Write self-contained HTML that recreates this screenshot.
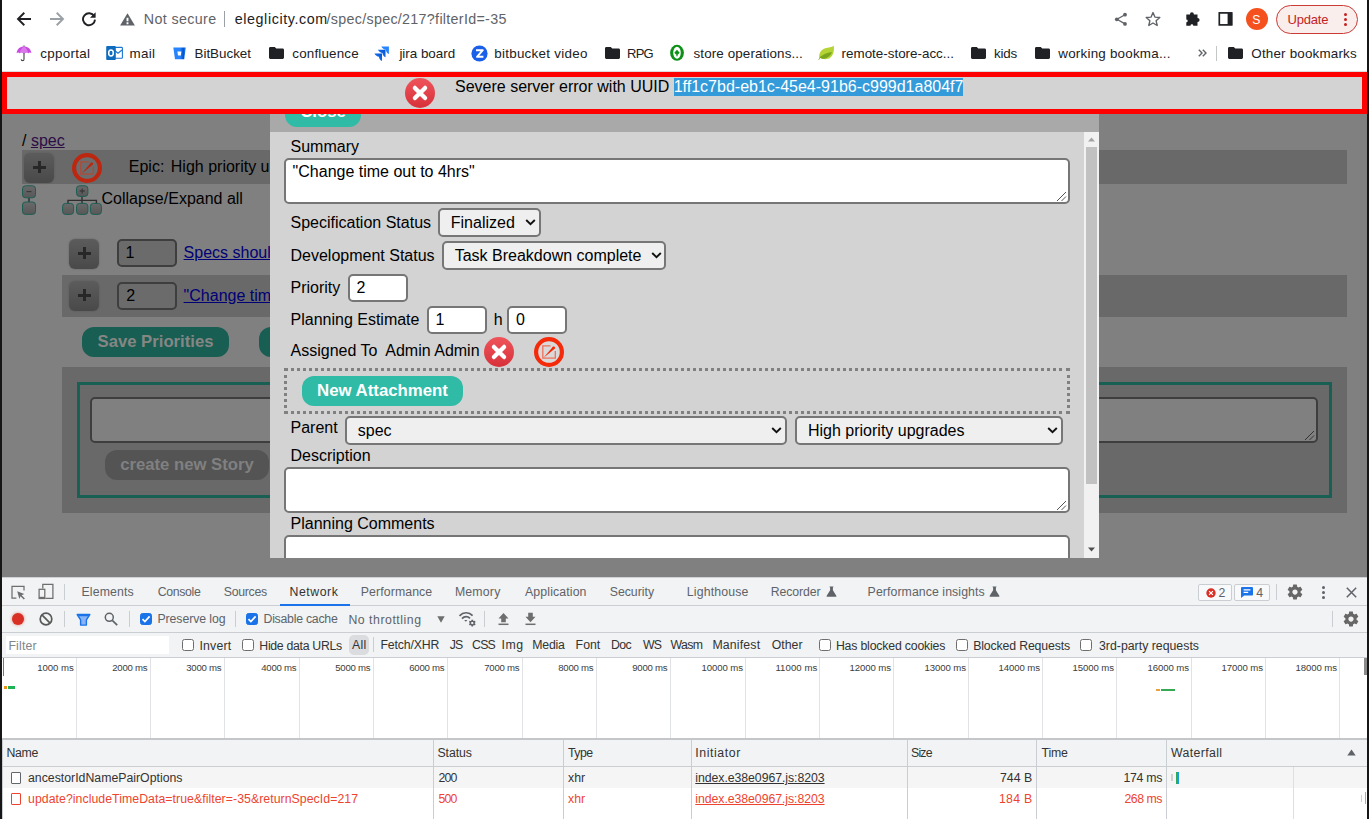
<!DOCTYPE html>
<html>
<head>
<meta charset="utf-8">
<title>spec</title>
<style>
*{box-sizing:border-box;margin:0;padding:0}
html,body{width:1369px;height:819px;overflow:hidden;background:#fff;font-family:"Liberation Sans",sans-serif;}
.abs,.abs div,.abs svg,.abs i,.abs b{position:absolute}
#root{position:absolute;left:0;top:0;width:1369px;height:819px;overflow:hidden}
.t{white-space:pre}
.pt{font-size:16px;white-space:pre;line-height:19px;color:#000}
.lnk{color:#000077;text-decoration:underline}
.plus{width:30px;height:30px;border-radius:6px;background:linear-gradient(#5c5c5c,#494949);box-shadow:0 0 1.5px rgba(60,60,60,.6)}
.plus i{left:8.9px;top:12.6px;width:13.2px;height:3px;background:#272727}
.plus b{left:14px;top:7.6px;width:3.2px;height:12.8px;background:#272727}
.pin{width:60px;height:28px;border:2px solid #3e3e3e;border-radius:5px;background:#6b6b6b}
.pbtn{height:30px;border-radius:12px;background:#185e53;color:#868684;font-weight:bold;font-size:16.7px;line-height:30px;text-align:center;white-space:pre}
.mbtn{height:30px;border-radius:12px;background:#2fbba6;color:#fff;font-weight:bold;font-size:16.8px;line-height:30px;text-align:center;white-space:pre}
.mta{border:2px solid #767676;border-radius:5px;background:#fff}
.min{width:60px;height:28px;border:2px solid #767676;border-radius:5px;background:#fff}
.msel{height:28.5px;border:2px solid #767676;border-radius:5px;background:#efefef}
.msel span{position:absolute;left:10.6px;top:2.8px}
.msel svg{right:2.8px;top:8.8px}
.cbx{width:12px;height:12px;border:1.3px solid #6e6e6e;border-radius:2.5px;background:#fff}
.cbx.on{background:#1a73e8;border-color:#1a73e8}
.vl{top:740px;width:1px;height:79px;background:#cacdd1}
</style>
</head>
<body>
<div id="root" class="abs">
<div style="left:0;top:0;width:2px;height:819px;background:#161616"></div>
<div style="left:1367px;top:0;width:2px;height:819px;background:#161616"></div>
<div id="chrome" class="abs">
<div style="left:2px;top:71px;width:1365px;height:1px;background:#dadce0"></div>
<!-- nav icons -->
<svg style="left:16px;top:11px" width="16" height="16" viewBox="0 0 16 16"><path d="M15 8H2.5M8.3 1.8L2 8l6.3 6.2" fill="none" stroke="#202124" stroke-width="1.9"/></svg>
<svg style="left:48.5px;top:11px" width="16" height="16" viewBox="0 0 16 16"><path d="M1 8h12.5M7.7 1.8L14 8l-6.3 6.2" fill="none" stroke="#9aa0a6" stroke-width="1.9"/></svg>
<svg style="left:80.5px;top:10.5px" width="16" height="16" viewBox="0 0 16 16"><path d="M13.2 5.2A6 6 0 1 0 14 8.6" fill="none" stroke="#202124" stroke-width="1.9"/><path d="M14.6 1.2v5.6H9z" fill="#202124"/></svg>
<svg style="left:120.400px;top:12.500px" width="15" height="13" viewBox="0 0 15 13"><path d="M7.500 .200L14.900 12.600H.100Z" fill="#5f6368"/><path d="M7.500 4.800v3.400M7.500 9.300v1.900" stroke="#fff" stroke-width="1.900"/></svg>
<div style="left:224px;top:11px;width:1px;height:15.5px;background:#9aa0a6"></div>
<!-- right icons -->
<svg style="left:1114px;top:11.500px" width="14" height="15" viewBox="0 0 14 15"><path d="M11 2.700L3 7.300l8 4.600" fill="none" stroke="#5f6368" stroke-width="1.300"/><circle cx="11" cy="2.700" r="1.900" fill="#5f6368"/><circle cx="2.800" cy="7.300" r="1.900" fill="#5f6368"/><circle cx="11" cy="11.900" r="1.900" fill="#5f6368"/></svg>
<svg style="left:1145px;top:11px" width="16" height="16" viewBox="0 0 16 16"><path d="M8 1.6l1.9 4.5 4.9.4-3.7 3.2 1.1 4.8L8 12l-4.2 2.5 1.1-4.8L1.2 6.5l4.9-.4z" fill="none" stroke="#5f6368" stroke-width="1.4" stroke-linejoin="round"/></svg>
<svg style="left:1185px;top:11px" width="17" height="16" viewBox="0 0 17 16"><path d="M1.300 3.400H4.900a2 2.100 0 1 1 4 0H12.500V6.900a2.100 2 0 1 1 0 4V14.700H8.300a1.400 1.400 0 1 0-2.800 0H1.300V11.300a1.400 1.400 0 1 0 0-2.800z" fill="#202124"/></svg>
<svg style="left:1217.500px;top:12px" width="15" height="14" viewBox="0 0 15 14"><rect x="1.300" y=".9" width="12.400" height="12" fill="none" stroke="#202124" stroke-width="1.700"/><rect x="9.600" y="1" width="4.600" height="12" fill="#202124"/></svg>
<div style="left:1246px;top:8.4px;width:22px;height:22px;border-radius:11px;background:#f4511e"></div>
<div style="left:1275.5px;top:5px;width:82.5px;height:28.5px;border-radius:15px;background:#faeeec;border:1px solid #cb3a35"></div>
<div style="left:1343.9px;top:13.1px;width:2.8px;height:2.8px;border-radius:2px;background:#c5221f"></div>
<div style="left:1343.9px;top:18px;width:2.8px;height:2.8px;border-radius:2px;background:#c5221f"></div>
<div style="left:1343.9px;top:23.3px;width:2.8px;height:2.8px;border-radius:2px;background:#c5221f"></div>
<!-- bookmark icons -->
<svg style="left:16px;top:45px" width="16" height="17" viewBox="0 0 16 17"><path d="M.6 8.2C1 3.8 4 1.4 8 1.4s7 2.4 7.4 6.8c-.9-.9-2.2-.9-3.1 0-.9-.9-2.5-.9-3.4 0H7.100c-.9-.9-2.500-.9-3.400 0-.9-.9-2.200-.9-3.100 0z" fill="#c84ae0"/><path d="M8 1.400C5.500 3 4.200 5.400 3.700 8.200 4.600 7.300 6.200 7.300 7.100 8.200h1.800c.9-.9 2.500-.9 3.400 0C11.800 5.400 10.500 3 8 1.400z" fill="#e08af0" opacity=".7"/><path d="M8 .6v1M8 8v6.200a1.400 1.400 0 0 1-2.800 0" fill="none" stroke="#444" stroke-width="1.1"/></svg>
<svg style="left:106px;top:45px" width="17" height="16" viewBox="0 0 17 16"><rect x="7" y="2.400" width="9.400" height="10.800" rx=".8" fill="#fff" stroke="#1976d2" stroke-width="1.1"/><path d="M8 5l4 3.200L16 5" fill="none" stroke="#1976d2" stroke-width="1.100"/><rect x=".2" y="1" width="9.600" height="14" rx=".9" fill="#0f6cbd"/><ellipse cx="5" cy="8" rx="2.300" ry="3" fill="none" stroke="#fff" stroke-width="1.500"/></svg>
<svg style="left:172.500px;top:46.500px" width="14" height="13" viewBox="0 0 14 13"><defs><linearGradient id="bg" x1="0" y1="0" x2="1" y2="0"><stop offset=".55" stop-color="#2684ff"/><stop offset=".8" stop-color="#0052cc"/><stop offset="1" stop-color="#2684ff"/></linearGradient></defs><path d="M.300.600h12.500l-1.600 11.600H2z" fill="url(#bg)"/><path d="M4.400 4.500h4l-.6 3.900H5z" fill="#fff"/></svg>
<svg class="fold" style="left:269px;top:46.500px" width="15" height="12" viewBox="0 0 15 12"><path d="M1.400 0h4.400l1.500 1.500h6.300c.8 0 1.400.6 1.400 1.400v7.700c0 .8-.6 1.400-1.400 1.400H1.400C.6 12 0 11.400 0 10.600V1.400C0 .6.600 0 1.400 0z" fill="#202124"/></svg>
<svg style="left:374px;top:45.500px" width="16" height="16" viewBox="0 0 16 16"><defs><linearGradient id="jg" x1="1" y1="0" x2="0" y2="1"><stop offset="0" stop-color="#0052cc"/><stop offset="1" stop-color="#2684ff"/></linearGradient></defs><path id="jc" d="M0 0H7.600V7.600C6.200 7.100 4.700 5.400 4.500 3.300C3 3.100.8 2 0 0Z" transform="translate(7.300 .4)" fill="#2684ff"/><path d="M0 0H7.600V7.600C6.200 7.100 4.700 5.400 4.500 3.300C3 3.100.8 2 0 0Z" transform="translate(3.900 3.700)" fill="url(#jg)"/><path d="M0 0H7.600V7.600C6.200 7.100 4.700 5.400 4.500 3.300C3 3.100.8 2 0 0Z" transform="translate(.4 7.400)" fill="url(#jg)"/></svg>
<svg style="left:470.500px;top:45px" width="17" height="17" viewBox="0 0 17 17"><circle cx="8.500" cy="8.500" r="8.100" fill="#1a5fe8"/><path d="M5 5.200h6.800L6 11.800h6.400" fill="none" stroke="#fff" stroke-width="1.900" stroke-linejoin="round"/></svg>
<svg class="fold" style="left:605px;top:46.500px" width="15" height="12" viewBox="0 0 15 12"><path d="M1.400 0h4.400l1.500 1.500h6.300c.8 0 1.400.6 1.400 1.400v7.700c0 .8-.6 1.400-1.400 1.400H1.400C.6 12 0 11.400 0 10.600V1.400C0 .6.600 0 1.400 0z" fill="#202124"/></svg>
<svg style="left:669px;top:44px" width="16" height="18" viewBox="0 0 16 18"><ellipse cx="8" cy="8.800" rx="6.900" ry="8" fill="#0d9018"/><ellipse cx="8" cy="8.800" rx="3.800" ry="6" fill="#fff"/><path d="M8 5.800L10.700 8.700L9 10.400H8.600V12.200H7.400V10.400H7L5.300 8.700Z" fill="#0d9018"/></svg>
<svg style="left:818px;top:45px" width="17" height="16" viewBox="0 0 17 16"><path d="M15.800.800c.6 5.400-.5 9.700-3.700 12-3 2.100-7.300 1.800-10.900-.3C1 7.600 3.400 4.500 7.300 3.300 10.500 2.400 13.700 2.600 15.800.800z" fill="#b5d334"/><path d="M1.200 12.500c3-2.800 7.500-4.900 12.800-5.600-1.300 3.800-4.800 6.700-9.600 6.800z" fill="#7aa51e"/><path d="M.8 14.600c.5-.9 1-1.500 1.700-2.100" stroke="#7aa51e" stroke-width="1"/></svg>
<svg class="fold" style="left:971px;top:46.500px" width="15" height="12" viewBox="0 0 15 12"><path d="M1.400 0h4.400l1.500 1.500h6.300c.8 0 1.400.6 1.400 1.400v7.700c0 .8-.6 1.400-1.400 1.400H1.400C.6 12 0 11.400 0 10.600V1.400C0 .6.600 0 1.400 0z" fill="#202124"/></svg>
<svg class="fold" style="left:1035px;top:46.500px" width="15" height="12" viewBox="0 0 15 12"><path d="M1.400 0h4.400l1.500 1.500h6.300c.8 0 1.400.6 1.400 1.400v7.700c0 .8-.6 1.400-1.400 1.400H1.400C.6 12 0 11.400 0 10.600V1.400C0 .6.600 0 1.400 0z" fill="#202124"/></svg>
<svg style="left:1197.500px;top:49px" width="9" height="8" viewBox="0 0 9 8"><path d="M.8.800L4 4 .8 7.200M4.800.800L8 4 4.800 7.200" fill="none" stroke="#5f6368" stroke-width="1.400"/></svg>
<div style="left:1216px;top:45.500px;width:1px;height:15px;background:#c4c7c5"></div>
<svg class="fold" style="left:1228px;top:46.500px" width="15" height="12" viewBox="0 0 15 12"><path d="M1.400 0h4.400l1.500 1.500h6.300c.8 0 1.400.6 1.400 1.400v7.700c0 .8-.6 1.400-1.400 1.400H1.400C.6 12 0 11.400 0 10.600V1.400C0 .6.600 0 1.400 0z" fill="#202124"/></svg>
<div class="t" style="left:143.8px;top:10px;font-size:14.3px;line-height:18px;color:#5f6368;letter-spacing:0.36px;">Not secure</div>
<div class="t" style="left:234.7px;top:10px;font-size:14.3px;line-height:18px;color:#202124;letter-spacing:0.60px;">eleglicity.com</div>
<div class="t" style="left:326.5px;top:10px;font-size:14.3px;line-height:18px;color:#5f6368;letter-spacing:0.30px;">/spec/spec/217?filterId=-35</div>
<div class="t" style="left:1252.3px;top:12px;font-size:12.2px;line-height:16px;color:#fff;">S</div>
<div class="t" style="left:1287.6px;top:11px;font-size:13px;line-height:17px;color:#c5221f;letter-spacing:-0.20px;">Update</div>
<div class="t" style="left:40.2px;top:45px;font-size:13.4px;line-height:17px;color:#202124;letter-spacing:0.31px;">cpportal</div>
<div class="t" style="left:129.4px;top:45px;font-size:13.4px;line-height:17px;color:#202124;letter-spacing:0.37px;">mail</div>
<div class="t" style="left:194.5px;top:45px;font-size:13.4px;line-height:17px;color:#202124;letter-spacing:-0.01px;">BitBucket</div>
<div class="t" style="left:292.3px;top:45px;font-size:13.4px;line-height:17px;color:#202124;letter-spacing:0.18px;">confluence</div>
<div class="t" style="left:399.4px;top:45px;font-size:13.4px;line-height:17px;color:#202124;letter-spacing:-0.01px;">jira board</div>
<div class="t" style="left:494.2px;top:45px;font-size:13.4px;line-height:17px;color:#202124;letter-spacing:0.28px;">bitbucket video</div>
<div class="t" style="left:627.1px;top:45px;font-size:13px;line-height:17px;color:#202124;letter-spacing:-0.80px;">RPG</div>
<div class="t" style="left:693.5px;top:45px;font-size:13.4px;line-height:17px;color:#202124;letter-spacing:0.12px;">store operations...</div>
<div class="t" style="left:841.6px;top:45px;font-size:13.4px;line-height:17px;color:#202124;">remote-store-acc...</div>
<div class="t" style="left:994.0px;top:45px;font-size:13.4px;line-height:17px;color:#202124;letter-spacing:-0.17px;">kids</div>
<div class="t" style="left:1058.3px;top:45px;font-size:13.4px;line-height:17px;color:#202124;letter-spacing:0.22px;">working bookma...</div>
<div class="t" style="left:1251.3px;top:45px;font-size:13.4px;line-height:17px;color:#202124;letter-spacing:0.19px;">Other bookmarks</div>
</div>

<div id="page" class="abs">
<div style="left:2px;top:72px;width:1365px;height:506px;background:#808080"></div>
<!-- breadcrumb -->
<div class="pt" style="left:22px;top:131px;color:#000">/ <span style="position:static;color:#2b0d46;text-decoration:underline">spec</span></div>
<!-- epic strip -->
<div style="left:22px;top:150px;width:1325px;height:34px;background:#696969"></div>
<div class="plus" style="left:24px;top:153px"><i></i><b></b></div>
<svg style="left:72px;top:153px" width="30" height="30" viewBox="0 0 30 30"><circle cx="15" cy="15" r="12.900" fill="#6d6d6d" stroke="#bd2710" stroke-width="4.200"/><path d="M16.600 8.800H8.800V21.200H21.300V14" fill="none" stroke="#b04a38" stroke-width="1.300"/><path d="M9.500 20.700L18.700 9.900L20.700 11.800Z" fill="#bd2710"/><circle cx="19.700" cy="10.800" r="1.400" fill="#bd2710"/></svg>
<div class="pt" style="left:128.8px;top:157px">Epic:</div>
<div class="pt" style="left:170.8px;top:157px">High priority upgrades</div>
<!-- collapse / expand icons -->
<svg style="left:21px;top:185px" width="16" height="31" viewBox="0 0 16 31"><defs><linearGradient id="bxg" x1="0" y1="0" x2="0" y2="1"><stop offset="0" stop-color="#6a6a6a"/><stop offset="1" stop-color="#575757"/></linearGradient></defs><path d="M8 13v5" stroke="#2e2e2e" stroke-width="1.5"/><rect x="1.5" y=".8" width="13" height="12" rx="3" fill="url(#bxg)" stroke="#1c5e54" stroke-width="1"/><rect x="1.5" y="17" width="13" height="12.4" rx="3" fill="url(#bxg)" stroke="#1c5e54" stroke-width="1"/><path d="M5.5 6.6h5" stroke="#3a3a3a" stroke-width="1.2"/></svg>
<svg style="left:61px;top:185px" width="42" height="31" viewBox="0 0 42 31"><path d="M21 11.5v7M7 19v-3.6h28.4V19" fill="none" stroke="#2e2e2e" stroke-width="1.4"/><rect x="15.5" y=".8" width="11.4" height="10.6" rx="3" fill="url(#bxg)" stroke="#1c5e54" stroke-width="1"/><rect x="1.6" y="18.4" width="11" height="11" rx="3" fill="url(#bxg)" stroke="#1c5e54" stroke-width="1"/><rect x="15.5" y="18.4" width="11.4" height="11" rx="3" fill="url(#bxg)" stroke="#1c5e54" stroke-width="1"/><rect x="29.4" y="18.4" width="11" height="11" rx="3" fill="url(#bxg)" stroke="#1c5e54" stroke-width="1"/><path d="M18.7 6h5M21.2 3.6v4.8" stroke="#3a3a3a" stroke-width="1.3"/></svg>
<div class="pt" style="left:101.5px;top:189px">Collapse/Expand all</div>
<!-- row 1 -->
<div class="plus" style="left:69px;top:239px"><i></i><b></b></div>
<div class="pin" style="left:117px;top:239px"></div>
<div class="pt" style="left:125.5px;top:243px">1</div>
<div class="pt lnk" style="left:183.6px;top:243px">Specs should be editable</div>
<!-- row 2 -->
<div style="left:62px;top:275px;width:1285px;height:41.5px;background:#696969"></div>
<div class="plus" style="left:69px;top:281px"><i></i><b></b></div>
<div class="pin" style="left:117px;top:282px"></div>
<div class="pt" style="left:126.3px;top:286px">2</div>
<div class="pt lnk" style="left:183.6px;top:286px">"Change time out to 4hrs"</div>
<!-- buttons -->
<div class="pbtn" style="left:82px;top:327px;width:147px">Save Priorities</div>
<div class="pbtn" style="left:259px;top:327px;width:147px"></div>
<!-- new story -->
<div style="left:62px;top:367px;width:1285px;height:145.5px;background:#696969"></div>
<div style="left:77px;top:382px;width:1255px;height:115.5px;border:3px solid #185f54"></div>
<div style="left:90px;top:397px;width:1228px;height:46px;border:2px solid #3e3e3e;border-radius:5px;background:#808080"></div>
<svg style="left:1303px;top:429px" width="12" height="12" viewBox="0 0 12 12"><path d="M11 2L2 11M11 6.5L6.5 11" stroke="#333" stroke-width="1"/></svg>
<div class="pbtn" style="left:105px;top:450px;width:164px;background:#545454;color:#808080">create new Story</div>
</div>

<div id="modal" class="abs">
<div style="left:270px;top:100px;width:829px;height:458px;background:#d3d3d3;overflow:hidden" id="mbox">
 <div style="left:0;top:0;width:829px;height:32px;background:#a9a9a9"></div>
 <div class="mbtn" style="left:15px;top:-3px;width:76px">Close</div>
 <!-- scrollbar -->
 <div style="left:814px;top:32px;width:15px;height:426px;background:#f1f1f1"></div>
 <div style="left:816px;top:47px;width:11px;height:337px;background:#c1c1c1"></div>
 <svg style="left:814px;top:32px" width="15" height="15" viewBox="0 0 15 15"><path d="M4 9.500L7.500 5.500L11 9.500Z" fill="#a3a3a3"/></svg>
 <svg style="left:814px;top:442px" width="15" height="15" viewBox="0 0 15 15"><path d="M4 5.500L7.500 9.500L11 5.500Z" fill="#505050"/></svg>
 <!-- content (coords relative to 270,100) -->
 <div class="pt" style="left:20.500px;top:37px">Summary</div>
 <div class="mta" style="left:14px;top:58px;width:785.500px;height:46px"></div>
 <div class="pt" style="left:22.600px;top:62px">"Change time out to 4hrs"</div>
 <svg class="grip" style="left:786px;top:91px"  width="11" height="11" viewBox="0 0 11 11"><path d="M10 1L1 10M10 5.500L5.500 10" stroke="#555" stroke-width="1"/></svg>

 <div class="pt" style="left:20.500px;top:113px">Specification Status</div>
 <div class="msel" style="left:168.200px;top:108.200px;width:102.600px"><span class="pt">Finalized</span><svg width="11" height="7" viewBox="0 0 11 7"><path d="M1.200 1L5.500 5.200L9.800 1" fill="none" stroke="#111" stroke-width="1.900"/></svg></div>

 <div class="pt" style="left:20.500px;top:146px">Development Status</div>
 <div class="msel" style="left:172.100px;top:241px;top:141px;width:224.400px"><span class="pt">Task Breakdown complete</span><svg width="11" height="7" viewBox="0 0 11 7"><path d="M1.200 1L5.500 5.200L9.800 1" fill="none" stroke="#111" stroke-width="1.900"/></svg></div>

 <div class="pt" style="left:20.500px;top:178px">Priority</div>
 <div class="min" style="left:78px;top:174px"></div>
 <div class="pt" style="left:86.500px;top:178px">2</div>

 <div class="pt" style="left:20.500px;top:210px">Planning Estimate</div>
 <div class="min" style="left:157px;top:206px"></div>
 <div class="pt" style="left:165.400px;top:210px">1</div>
 <div class="pt" style="left:223.700px;top:210px">h</div>
 <div class="min" style="left:237px;top:206px"></div>
 <div class="pt" style="left:246px;top:210px">0</div>

 <div class="pt" style="left:20.500px;top:241px">Assigned To</div>
 <div class="pt" style="left:115.300px;top:241px">Admin Admin</div>
 <svg style="left:214px;top:237px" width="30" height="30" viewBox="0 0 30 30"><defs><linearGradient id="rg1" x1="0" y1="0" x2="0" y2="1"><stop offset="0" stop-color="#ef545b"/><stop offset="1" stop-color="#d7313a"/></linearGradient></defs><circle cx="15" cy="15" r="15" fill="url(#rg1)"/><path d="M9.900 9.900L20.100 20.100M20.100 9.900L9.900 20.100" stroke="#fff" stroke-width="4.300" stroke-linecap="round"/></svg>
 <svg style="left:264px;top:237px" width="30" height="30" viewBox="0 0 30 30"><circle cx="15" cy="15" r="12.900" fill="#d9d9d9" stroke="#f42a0a" stroke-width="4.200"/><path d="M16.600 8.800H8.800V21.200H21.300V14" fill="none" stroke="#f0705c" stroke-width="1.300"/><path d="M9.500 20.700L18.700 9.900L20.700 11.800Z" fill="#f42a0a"/><circle cx="19.700" cy="10.800" r="1.400" fill="#f42a0a"/></svg>

 <div style="left:14px;top:268px;width:786px;height:46px;border:3px dotted #808080"></div>
 <div class="mbtn" style="left:32px;top:276px;width:161px">New Attachment</div>

 <div class="pt" style="left:20.500px;top:318px">Parent</div>
 <div class="msel" style="left:75.200px;top:316.300px;width:441.800px"><span class="pt" style="top:3.200px">spec</span><svg width="11" height="7" viewBox="0 0 11 7"><path d="M1.200 1L5.500 5.200L9.800 1" fill="none" stroke="#111" stroke-width="1.900"/></svg></div>
 <div class="msel" style="left:525.400px;top:316.300px;width:267.200px"><span class="pt" style="top:3.200px">High priority upgrades</span><svg width="11" height="7" viewBox="0 0 11 7"><path d="M1.200 1L5.500 5.200L9.800 1" fill="none" stroke="#111" stroke-width="1.900"/></svg></div>

 <div class="pt" style="left:20.500px;top:346px">Description</div>
 <div class="mta" style="left:14px;top:367px;width:785.500px;height:46px"></div>
 <svg class="grip" style="left:786px;top:400px"  width="11" height="11" viewBox="0 0 11 11"><path d="M10 1L1 10M10 5.500L5.500 10" stroke="#555" stroke-width="1"/></svg>

 <div class="pt" style="left:20.500px;top:414px">Planning Comments</div>
 <div class="mta" style="left:14px;top:435.400px;width:785.500px;height:46px"></div>
</div>
<!-- error banner -->
<div style="left:2px;top:72px;width:1365px;height:42px;background:#d3d3d3;border:5px solid #ff0000"></div>
<svg style="left:405px;top:78px" width="30" height="30" viewBox="0 0 30 30"><circle cx="15" cy="15" r="15" fill="url(#rg1)"/><path d="M9.900 9.900L20.100 20.100M20.100 9.900L9.900 20.100" stroke="#fff" stroke-width="4.300" stroke-linecap="round"/></svg>
<div class="pt" style="left:455px;top:77px">Severe server error with UUID <span style="position:static;background:#349bda;color:#fff;padding-bottom:1px">1ff1c7bd-eb1c-45e4-91b6-c999d1a804f7</span></div>
</div>

<div id="dev" class="abs">
<div style="left:2px;top:578px;width:1365px;height:241px;background:#f1f3f4"></div>
<div style="left:2px;top:577px;width:1365px;height:1px;background:#cfd1d4"></div>
<!-- row borders -->
<div style="left:2px;top:605px;width:1365px;height:1px;background:#cacdd1"></div>
<div style="left:2px;top:632px;width:1365px;height:1px;background:#cacdd1"></div>
<div style="left:2px;top:657px;width:1365px;height:1px;background:#cacdd1"></div>
<!-- tab bar icons -->
<svg style="left:11px;top:584px" width="16" height="16" viewBox="0 0 16 16"><path d="M13 6.600V2.400H1V14H5.400" fill="none" stroke="#6e6e6e" stroke-width="1.250"/><path d="M6.200 7.300L13.300 10.100L10.600 11.200L13.900 14.500L12.800 15.600L9.500 12.300L8.400 15z" fill="#6e6e6e"/></svg>
<svg style="left:37.500px;top:582.700px" width="16" height="17" viewBox="0 0 16 17"><path d="M4.800 5.400V1.300H14.900V15.300H7.400" fill="none" stroke="#6e6e6e" stroke-width="1.250"/><rect x="1.100" y="6.300" width="5.700" height="9.200" fill="none" stroke="#6e6e6e" stroke-width="1.250"/><path d="M1.100 14.700h5.700" stroke="#6e6e6e" stroke-width="1.800"/></svg>
<div style="left:64px;top:584px;width:1px;height:16px;background:#cacdd1"></div>
<div style="left:279.500px;top:603.500px;width:70.500px;height:2px;background:#1a73e8"></div>
<svg class="flask" style="left:825.500px;top:586px" width="11" height="11" viewBox="0 0 11 11"><path d="M3.600.400h3.800v.9H6.900v3l3.400 5.500c.3.500 0 1-.6 1H1.300c-.6 0-.9-.5-.6-1l3.400-5.500v-3H3.600z" fill="#5f6368"/></svg>
<svg class="flask" style="left:988.800px;top:586px" width="11" height="11" viewBox="0 0 11 11"><path d="M3.600.400h3.800v.9H6.900v3l3.400 5.500c.3.500 0 1-.6 1H1.300c-.6 0-.9-.5-.6-1l3.400-5.500v-3H3.600z" fill="#5f6368"/></svg>
<!-- badges -->
<div style="left:1198px;top:584px;width:33.500px;height:16.500px;border:1px solid #cacdd1;border-radius:2px;background:#f8f9fa"></div>
<svg style="left:1205.500px;top:588px" width="10" height="10" viewBox="0 0 10 10"><circle cx="5" cy="5" r="4.700" fill="#d93025"/><path d="M3.100 3.100l3.800 3.800M6.900 3.100L3.100 6.900" stroke="#fff" stroke-width="1.200"/></svg>
<div style="left:1234px;top:584px;width:35.500px;height:16.500px;border:1px solid #cacdd1;border-radius:2px;background:#f8f9fa"></div>
<svg style="left:1240.500px;top:587px" width="12" height="11" viewBox="0 0 12 11"><path d="M1.200 0h9.600c.7 0 1.200.5 1.200 1.200v6.200c0 .7-.5 1.200-1.200 1.200H3.200L0 11V1.200C0 .5.500 0 1.200 0z" fill="#1a73e8"/><path d="M2.600 2.800h6.800M2.600 5.400h4.600" stroke="#fff" stroke-width="1.200"/></svg>
<div style="left:1276px;top:584px;width:1px;height:16px;background:#cacdd1"></div>
<svg class="gear" style="left:1286px;top:583px" width="18" height="18" viewBox="0 0 24 24"><path d="M19.430 12.980c.040-.320.070-.640.070-.980s-.030-.660-.070-.980l2.110-1.650c.190-.150.240-.420.120-.640l-2-3.460c-.120-.220-.390-.300-.610-.220l-2.490 1c-.520-.400-1.080-.730-1.690-.980l-.380-2.650C14.460 2.180 14.250 2 14 2h-4c-.250 0-.460.180-.490.420l-.380 2.650c-.610.250-1.170.590-1.690.980l-2.490-1c-.230-.090-.490 0-.610.220l-2 3.460c-.130.220-.070.490.12.640l2.110 1.650c-.040.320-.070.650-.070.980s.030.660.070.980l-2.110 1.650c-.190.150-.240.420-.120.640l2 3.460c.120.220.390.300.610.220l2.490-1c.520.400 1.080.730 1.690.980l.380 2.650c.030.240.240.420.490.420h4c.250 0 .460-.180.490-.420l.380-2.650c.610-.250 1.170-.590 1.690-.980l2.490 1c.230.090.490 0 .610-.220l2-3.460c.120-.220.070-.490-.120-.640l-2.110-1.650zM12 15.500c-1.930 0-3.500-1.570-3.500-3.500s1.570-3.500 3.500-3.500 3.500 1.570 3.500 3.500-1.570 3.500-3.500 3.500z" fill="#676767"/></svg>
<div style="left:1321.800px;top:585.800px;width:3px;height:3px;border-radius:2px;background:#5f6368"></div>
<div style="left:1321.800px;top:590.900px;width:3px;height:3px;border-radius:2px;background:#5f6368"></div>
<div style="left:1321.800px;top:596px;width:3px;height:3px;border-radius:2px;background:#5f6368"></div>
<svg style="left:1345.500px;top:587px" width="11" height="11" viewBox="0 0 11 11"><path d="M.8.800l9.400 9.400M10.200.800L.8 10.200" stroke="#5f6368" stroke-width="1.500"/></svg>
<!-- toolbar 2 icons -->
<div style="left:11.700px;top:612.500px;width:12.600px;height:12.600px;border-radius:7px;background:#d93025;box-shadow:0 0 3px rgba(217,48,37,.6)"></div>
<svg style="left:39.400px;top:612.300px" width="14" height="14" viewBox="0 0 14 14"><circle cx="7" cy="7" r="5.800" fill="none" stroke="#595959" stroke-width="1.700"/><path d="M2.900 2.900l8.200 8.200" stroke="#595959" stroke-width="1.700"/></svg>
<div style="left:64px;top:611px;width:1px;height:16px;background:#cacdd1"></div>
<svg style="left:75.500px;top:613px" width="15" height="13" viewBox="0 0 15 13"><path d="M1.200 1.500h12.600L10.400 6.800v5.300H4.600V6.800z" fill="#8ab4f8" stroke="#1a73e8" stroke-width="1.400" stroke-linejoin="round"/><path d="M2.200 1.400h10.600l-1.100 1.900H3.300z" fill="#1a73e8"/></svg>
<svg style="left:104px;top:612px" width="14" height="14" viewBox="0 0 14 14"><circle cx="5.300" cy="5.300" r="4" fill="none" stroke="#5f6368" stroke-width="1.500"/><path d="M8.300 8.300l4.900 4.900" stroke="#5f6368" stroke-width="1.700"/></svg>
<div style="left:129px;top:611px;width:1px;height:16px;background:#cacdd1"></div>
<div class="cbx on" style="left:140px;top:613.300px"></div>
<svg style="left:140px;top:613.300px" width="12" height="12" viewBox="0 0 12 12"><path d="M2.500 6.200l2.400 2.400 4.700-5.200" fill="none" stroke="#fff" stroke-width="1.700"/></svg>
<div style="left:235px;top:611px;width:1px;height:16px;background:#cacdd1"></div>
<div class="cbx on" style="left:246px;top:613.300px"></div>
<svg style="left:246px;top:613.300px" width="12" height="12" viewBox="0 0 12 12"><path d="M2.500 6.200l2.400 2.400 4.700-5.200" fill="none" stroke="#fff" stroke-width="1.700"/></svg>
<svg style="left:436.500px;top:615.500px" width="8" height="7" viewBox="0 0 8 7"><path d="M.3.300h7.400L4 6.800z" fill="#6e6e6e"/></svg>
<svg style="left:457.500px;top:611px" width="19" height="16" viewBox="0 0 19 16"><path d="M1.500 4.800C5.300.800 11 .800 14.600 4.600" fill="none" stroke="#5f6368" stroke-width="1.700"/><path d="M4 7.600c2.400-2.500 5.700-2.500 8 -.2" fill="none" stroke="#5f6368" stroke-width="1.700"/><path d="M6.200 8.900h3.200L7.800 10.700z" fill="#5f6368"/><g transform="translate(10.200 8) scale(.34)"><path d="M19.430 12.980c.040-.320.070-.640.070-.980s-.030-.660-.070-.980l2.110-1.650c.190-.150.240-.420.120-.640l-2-3.460c-.120-.220-.390-.300-.610-.220l-2.490 1c-.520-.400-1.080-.730-1.690-.980l-.380-2.650C14.460 2.180 14.250 2 14 2h-4c-.250 0-.460.180-.490.420l-.380 2.650c-.610.250-1.170.590-1.690.980l-2.490-1c-.230-.090-.490 0-.610.220l-2 3.460c-.130.220-.070.490.12.640l2.110 1.650c-.040.320-.070.650-.070.980s.030.660.070.980l-2.110 1.650c-.190.150-.240.420-.120.640l2 3.460c.120.220.390.300.610.220l2.490-1c.520.400 1.080.730 1.690.980l.380 2.650c.030.240.240.420.490.420h4c.250 0 .460-.180.490-.420l.380-2.650c.610-.250 1.170-.590 1.690-.980l2.490 1c.230.090.490 0 .610-.220l2-3.460c.120-.220.070-.490-.120-.640l-2.110-1.650zM12 15.500c-1.930 0-3.500-1.570-3.500-3.500s1.570-3.500 3.500-3.500 3.500 1.570 3.500 3.500-1.570 3.500-3.500 3.500z" fill="#5f6368"/></g></svg>
<div style="left:484px;top:611px;width:1px;height:16px;background:#cacdd1"></div>
<svg style="left:497.500px;top:612px" width="11" height="14" viewBox="0 0 11 14"><path d="M5.500 1l5 5.400H7.800v3.900H3.200V6.400H.5z" fill="#6e6e6e"/><path d="M.5 12.300h10" stroke="#6e6e6e" stroke-width="1.500"/></svg>
<svg style="left:525.400px;top:612px" width="11" height="14" viewBox="0 0 11 14"><path d="M5.500 10.200L.5 4.800h2.700V.8h4.600v4h2.700z" fill="#6e6e6e"/><path d="M.5 12.300h10" stroke="#6e6e6e" stroke-width="1.500"/></svg>
<div style="left:1332px;top:611px;width:1px;height:16px;background:#cacdd1"></div>
<svg class="gear" style="left:1342.200px;top:609.700px" width="18" height="18" viewBox="0 0 24 24"><path d="M19.430 12.980c.040-.320.070-.640.070-.980s-.030-.660-.070-.980l2.110-1.650c.190-.150.240-.420.120-.640l-2-3.460c-.120-.220-.390-.300-.610-.220l-2.490 1c-.520-.400-1.080-.730-1.690-.980l-.380-2.650C14.460 2.180 14.250 2 14 2h-4c-.250 0-.460.180-.490.420l-.380 2.650c-.610.250-1.170.590-1.690.980l-2.490-1c-.230-.090-.490 0-.610.220l-2 3.460c-.130.220-.070.490.12.640l2.110 1.650c-.040.320-.070.650-.070.980s.030.660.070.980l-2.110 1.650c-.190.150-.240.420-.120.640l2 3.460c.120.220.390.300.610.220l2.490-1c.520.400 1.080.730 1.690.980l.380 2.650c.030.240.240.420.490.420h4c.250 0 .460-.180.490-.420l.380-2.650c.610-.250 1.170-.590 1.690-.980l2.490 1c.230.090.490 0 .610-.220l2-3.460c.120-.220.070-.490-.120-.640l-2.110-1.650zM12 15.500c-1.930 0-3.500-1.570-3.500-3.500s1.570-3.500 3.500-3.500 3.500 1.570 3.500 3.500-1.570 3.500-3.500 3.500z" fill="#676767"/></svg>
<!-- filter row -->
<div style="left:6px;top:636px;width:163px;height:18px;background:#fff"></div>
<div class="cbx" style="left:182px;top:639.300px"></div>
<div class="cbx" style="left:242px;top:639.300px"></div>
<div style="left:349px;top:635px;width:20px;height:19.700px;border-radius:5px;background:#dadce0"></div>
<div style="left:373px;top:637px;width:1px;height:15px;background:#cacdd1"></div>
<div class="cbx" style="left:819.300px;top:639.300px"></div>
<div class="cbx" style="left:956.200px;top:639.300px"></div>
<div class="cbx" style="left:1079.800px;top:639.300px"></div>
<!-- overview -->
<div style="left:2px;top:658px;width:1365px;height:80px;background:#fff"></div>
<div style="left:76px;top:658px;width:1px;height:80px;background:#e0e2e5"></div><div style="left:150px;top:658px;width:1px;height:80px;background:#e0e2e5"></div><div style="left:224px;top:658px;width:1px;height:80px;background:#e0e2e5"></div><div style="left:299px;top:658px;width:1px;height:80px;background:#e0e2e5"></div><div style="left:373px;top:658px;width:1px;height:80px;background:#e0e2e5"></div><div style="left:447px;top:658px;width:1px;height:80px;background:#e0e2e5"></div><div style="left:522px;top:658px;width:1px;height:80px;background:#e0e2e5"></div><div style="left:596px;top:658px;width:1px;height:80px;background:#e0e2e5"></div><div style="left:670px;top:658px;width:1px;height:80px;background:#e0e2e5"></div><div style="left:745px;top:658px;width:1px;height:80px;background:#e0e2e5"></div><div style="left:819px;top:658px;width:1px;height:80px;background:#e0e2e5"></div><div style="left:893px;top:658px;width:1px;height:80px;background:#e0e2e5"></div><div style="left:968px;top:658px;width:1px;height:80px;background:#e0e2e5"></div><div style="left:1042px;top:658px;width:1px;height:80px;background:#e0e2e5"></div><div style="left:1116px;top:658px;width:1px;height:80px;background:#e0e2e5"></div><div style="left:1191px;top:658px;width:1px;height:80px;background:#e0e2e5"></div><div style="left:1265px;top:658px;width:1px;height:80px;background:#e0e2e5"></div><div style="left:1339px;top:658px;width:1px;height:80px;background:#e0e2e5"></div>
<div style="left:3px;top:658px;width:1px;height:18px;background:#777"></div><div style="left:3.500px;top:686px;width:3.300px;height:2.700px;background:#e8961c"></div>
<div style="left:7.900px;top:686px;width:6.900px;height:2.700px;background:#1eb355"></div>
<div style="left:1156px;top:689px;width:4px;height:2px;background:#e8a33d"></div>
<div style="left:1161px;top:689px;width:14px;height:2px;background:#34a853"></div>
<div style="left:1364.300px;top:658px;width:2.700px;height:17px;background:#8a8a8a"></div>
<div style="left:2px;top:738px;width:1365px;height:2px;background:#c4c7ca"></div>
<!-- table -->
<div style="left:2px;top:740px;width:1365px;height:26px;background:#f1f3f4"></div>
<div style="left:2px;top:766px;width:1365px;height:1px;background:#cacdd1"></div>
<div style="left:2px;top:767px;width:1365px;height:21px;background:#f5f5f5"></div>
<div style="left:2px;top:788px;width:1365px;height:31px;background:#fff"></div>
<div class="vl" style="left:433px"></div><div class="vl" style="left:563px"></div><div class="vl" style="left:691px"></div><div class="vl" style="left:907px"></div><div class="vl" style="left:1036px"></div><div class="vl" style="left:1166px"></div>
<div style="left:11px;top:772px;width:10.300px;height:11.600px;border:1.200px solid #62666b;border-radius:1px;background:#fff"></div>
<div style="left:11px;top:793px;width:10.300px;height:11.600px;border:1.300px solid #ee442f;border-radius:1px;background:#fff"></div>
<svg style="left:1346.500px;top:748.500px" width="9" height="7" viewBox="0 0 9 7"><path d="M.3 6.600h8.400L4.500.400z" fill="#5f6368"/></svg>
<div style="left:2px;top:740px;width:1px;height:79px;background:#c9ccd0"></div>
<!-- waterfall -->
<div style="left:1292.500px;top:767px;width:1px;height:52px;background:#dcdfe3"></div>
<div style="left:1171px;top:774px;width:1.500px;height:7px;background:#d0d0d0"></div>
<div style="left:1175.500px;top:771.500px;width:1.600px;height:12px;background:#34a853"></div>
<div style="left:1177.100px;top:771.500px;width:2px;height:12px;background:#1a9be8"></div>
<div style="left:1360.500px;top:795px;width:1.500px;height:7px;background:#d0d0d0"></div>
<div style="left:1364.500px;top:792px;width:1.500px;height:12px;background:#e8a33d"></div>
<div class="t" style="left:81.5px;top:584px;font-size:12.3px;line-height:16px;color:#5f6368;letter-spacing:0.13px;">Elements</div>
<div class="t" style="left:157.7px;top:584px;font-size:12.3px;line-height:16px;color:#5f6368;letter-spacing:-0.33px;">Console</div>
<div class="t" style="left:223.8px;top:584px;font-size:12.3px;line-height:16px;color:#5f6368;letter-spacing:-0.30px;">Sources</div>
<div class="t" style="left:289.6px;top:584px;font-size:12.3px;line-height:16px;color:#333;letter-spacing:0.52px;">Network</div>
<div class="t" style="left:360.8px;top:584px;font-size:12.3px;line-height:16px;color:#5f6368;letter-spacing:0.10px;">Performance</div>
<div class="t" style="left:454.9px;top:584px;font-size:12.3px;line-height:16px;color:#5f6368;letter-spacing:0.20px;">Memory</div>
<div class="t" style="left:525.0px;top:584px;font-size:12.3px;line-height:16px;color:#5f6368;letter-spacing:0.13px;">Application</div>
<div class="t" style="left:609.7px;top:584px;font-size:12.3px;line-height:16px;color:#5f6368;letter-spacing:-0.01px;">Security</div>
<div class="t" style="left:686.8px;top:584px;font-size:12.3px;line-height:16px;color:#5f6368;letter-spacing:0.16px;">Lighthouse</div>
<div class="t" style="left:770.8px;top:584px;font-size:12.3px;line-height:16px;color:#5f6368;letter-spacing:-0.11px;">Recorder</div>
<div class="t" style="left:867.6px;top:584px;font-size:12.3px;line-height:16px;color:#5f6368;letter-spacing:0.08px;">Performance insights</div>
<div class="t" style="left:1218.5px;top:585px;font-size:12.3px;line-height:16px;color:#5f6368;">2</div>
<div class="t" style="left:1256.3px;top:585px;font-size:12.3px;line-height:16px;color:#5f6368;">4</div>
<div class="t" style="left:157.5px;top:611px;font-size:12.3px;line-height:16px;color:#5f6368;letter-spacing:-0.09px;">Preserve log</div>
<div class="t" style="left:263.5px;top:611px;font-size:12.3px;line-height:16px;color:#5f6368;letter-spacing:-0.25px;">Disable cache</div>
<div class="t" style="left:348.4px;top:612px;font-size:12.3px;line-height:16px;color:#5f6368;letter-spacing:0.53px;">No throttling</div>
<div class="t" style="left:8.4px;top:638px;font-size:12.3px;line-height:16px;color:#80868b;letter-spacing:0.18px;">Filter</div>
<div class="t" style="left:199.4px;top:638px;font-size:12.3px;line-height:16px;color:#333;letter-spacing:0.22px;">Invert</div>
<div class="t" style="left:259.3px;top:638px;font-size:12.3px;line-height:16px;color:#333;letter-spacing:-0.30px;">Hide data URLs</div>
<div class="t" style="left:351.9px;top:637px;font-size:12.3px;line-height:16px;color:#333;letter-spacing:0.35px;">All</div>
<div class="t" style="left:380.5px;top:637px;font-size:12.3px;line-height:16px;color:#333;letter-spacing:-0.15px;">Fetch/XHR</div>
<div class="t" style="left:449.7px;top:637px;font-size:12.3px;line-height:16px;color:#333;letter-spacing:-0.80px;">JS</div>
<div class="t" style="left:472.1px;top:637px;font-size:12.3px;line-height:16px;color:#333;letter-spacing:-0.80px;">CSS</div>
<div class="t" style="left:501.6px;top:637px;font-size:12.3px;line-height:16px;color:#333;letter-spacing:0.45px;">Img</div>
<div class="t" style="left:532.2px;top:637px;font-size:12.3px;line-height:16px;color:#333;letter-spacing:-0.18px;">Media</div>
<div class="t" style="left:575.6px;top:637px;font-size:12.3px;line-height:16px;color:#333;letter-spacing:0.03px;">Font</div>
<div class="t" style="left:610.9px;top:637px;font-size:12.3px;line-height:16px;color:#333;letter-spacing:-0.55px;">Doc</div>
<div class="t" style="left:643.0px;top:637px;font-size:12.3px;line-height:16px;color:#333;letter-spacing:-0.80px;">WS</div>
<div class="t" style="left:670.4px;top:637px;font-size:12.3px;line-height:16px;color:#333;letter-spacing:-0.57px;">Wasm</div>
<div class="t" style="left:712.4px;top:637px;font-size:12.3px;line-height:16px;color:#333;letter-spacing:0.17px;">Manifest</div>
<div class="t" style="left:771.8px;top:637px;font-size:12.3px;line-height:16px;color:#333;">Other</div>
<div class="t" style="left:835.9px;top:638px;font-size:12.3px;line-height:16px;color:#333;letter-spacing:-0.18px;">Has blocked cookies</div>
<div class="t" style="left:973.2px;top:638px;font-size:12.3px;line-height:16px;color:#333;letter-spacing:-0.15px;">Blocked Requests</div>
<div class="t" style="left:1099.0px;top:638px;font-size:12.3px;line-height:16px;color:#333;letter-spacing:0.01px;">3rd-party requests</div>
<div class="t" style="left:37.2px;top:661px;font-size:9.6px;line-height:13px;color:#3c3c3c;letter-spacing:-0.05px;">1000 ms</div>
<div class="t" style="left:112.2px;top:661px;font-size:9.6px;line-height:13px;color:#3c3c3c;letter-spacing:-0.22px;">2000 ms</div>
<div class="t" style="left:186.2px;top:661px;font-size:9.6px;line-height:13px;color:#3c3c3c;letter-spacing:-0.22px;">3000 ms</div>
<div class="t" style="left:261.2px;top:661px;font-size:9.6px;line-height:13px;color:#3c3c3c;letter-spacing:-0.22px;">4000 ms</div>
<div class="t" style="left:335.2px;top:661px;font-size:9.6px;line-height:13px;color:#3c3c3c;letter-spacing:-0.22px;">5000 ms</div>
<div class="t" style="left:409.2px;top:661px;font-size:9.6px;line-height:13px;color:#3c3c3c;letter-spacing:-0.22px;">6000 ms</div>
<div class="t" style="left:484.2px;top:661px;font-size:9.6px;line-height:13px;color:#3c3c3c;letter-spacing:-0.22px;">7000 ms</div>
<div class="t" style="left:558.2px;top:661px;font-size:9.6px;line-height:13px;color:#3c3c3c;letter-spacing:-0.22px;">8000 ms</div>
<div class="t" style="left:632.2px;top:661px;font-size:9.6px;line-height:13px;color:#3c3c3c;letter-spacing:-0.22px;">9000 ms</div>
<div class="t" style="left:701.4px;top:661px;font-size:9.6px;line-height:13px;color:#3c3c3c;letter-spacing:-0.07px;">10000 ms</div>
<div class="t" style="left:775.4px;top:661px;font-size:9.6px;line-height:13px;color:#3c3c3c;letter-spacing:0.07px;">11000 ms</div>
<div class="t" style="left:849.4px;top:661px;font-size:9.6px;line-height:13px;color:#3c3c3c;letter-spacing:-0.07px;">12000 ms</div>
<div class="t" style="left:924.4px;top:661px;font-size:9.6px;line-height:13px;color:#3c3c3c;letter-spacing:-0.07px;">13000 ms</div>
<div class="t" style="left:998.4px;top:661px;font-size:9.6px;line-height:13px;color:#3c3c3c;letter-spacing:-0.07px;">14000 ms</div>
<div class="t" style="left:1072.4px;top:661px;font-size:9.6px;line-height:13px;color:#3c3c3c;letter-spacing:-0.07px;">15000 ms</div>
<div class="t" style="left:1147.4px;top:661px;font-size:9.6px;line-height:13px;color:#3c3c3c;letter-spacing:-0.07px;">16000 ms</div>
<div class="t" style="left:1221.4px;top:661px;font-size:9.6px;line-height:13px;color:#3c3c3c;letter-spacing:-0.07px;">17000 ms</div>
<div class="t" style="left:1295.4px;top:661px;font-size:9.6px;line-height:13px;color:#3c3c3c;letter-spacing:-0.07px;">18000 ms</div>
<div class="t" style="left:6.5px;top:745px;font-size:12.3px;line-height:16px;color:#333;letter-spacing:-0.33px;">Name</div>
<div class="t" style="left:437.5px;top:745px;font-size:12.3px;line-height:16px;color:#333;letter-spacing:-0.10px;">Status</div>
<div class="t" style="left:568.0px;top:745px;font-size:12.3px;line-height:16px;color:#333;letter-spacing:-0.50px;">Type</div>
<div class="t" style="left:695.2px;top:745px;font-size:12.3px;line-height:16px;color:#333;letter-spacing:0.60px;">Initiator</div>
<div class="t" style="left:911.0px;top:745px;font-size:12.3px;line-height:16px;color:#333;letter-spacing:-0.80px;">Size</div>
<div class="t" style="left:1041.5px;top:745px;font-size:12.3px;line-height:16px;color:#333;letter-spacing:-0.17px;">Time</div>
<div class="t" style="left:1171.0px;top:745px;font-size:12.3px;line-height:16px;color:#333;letter-spacing:0.38px;">Waterfall</div>
<div class="t" style="left:28.0px;top:770px;font-size:12.3px;line-height:16px;color:#333;">ancestorIdNamePairOptions</div>
<div class="t" style="left:438.5px;top:770px;font-size:12.3px;line-height:16px;color:#333;letter-spacing:-0.80px;">200</div>
<div class="t" style="left:568.0px;top:770px;font-size:12.3px;line-height:16px;color:#333;">xhr</div>
<div class="t" style="left:1000.0px;top:770px;font-size:12.3px;line-height:16px;color:#333;">744 B</div>
<div class="t" style="left:1123.5px;top:770px;font-size:12.3px;line-height:16px;color:#333;letter-spacing:-0.30px;">174 ms</div>
<div class="t" style="left:28.0px;top:791px;font-size:12.3px;line-height:16px;color:#ee442f;letter-spacing:0.05px;">update?includeTimeData=true&amp;filter=-35&amp;returnSpecId=217</div>
<div class="t" style="left:438.5px;top:791px;font-size:12.3px;line-height:16px;color:#ee442f;letter-spacing:-0.80px;">500</div>
<div class="t" style="left:568.0px;top:791px;font-size:12.3px;line-height:16px;color:#ee442f;">xhr</div>
<div class="t" style="left:999.0px;top:791px;font-size:12.3px;line-height:16px;color:#ee442f;letter-spacing:0.25px;">184 B</div>
<div class="t" style="left:1124.5px;top:791px;font-size:12.3px;line-height:16px;color:#ee442f;letter-spacing:-0.50px;">268 ms</div>
<div class="t" style="left:695.3px;top:770px;font-size:12.3px;line-height:16px;color:#333;letter-spacing:-0.06px;font-weight:normal;text-decoration:underline;">index.e38e0967.js:8203</div>
<div class="t" style="left:695.3px;top:791px;font-size:12.3px;line-height:16px;color:#ee442f;letter-spacing:-0.06px;font-weight:normal;text-decoration:underline;">index.e38e0967.js:8203</div>
</div>

</div>
</body>
</html>
